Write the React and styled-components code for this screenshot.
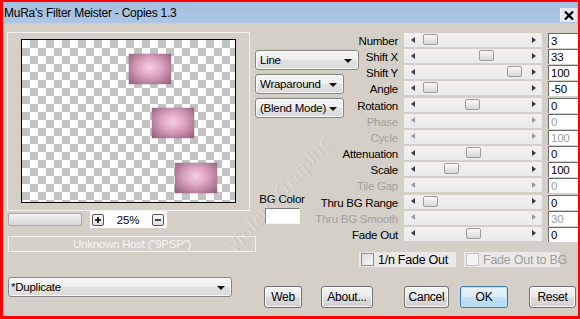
import React from "react"
import styled, { createGlobalStyle } from "styled-components"

const GlobalStyle = createGlobalStyle`
  html, body { margin: 0; padding: 0; background: #d4d0c8; }
  body { font-family: "Liberation Sans", Arial, sans-serif; }
`

const UI = `"Liberation Sans", Arial, sans-serif`

const Window = styled.div`
  position: relative;
  width: 580px;
  height: 319px;
  box-sizing: border-box;
  border-style: solid;
  border-color: #f00;
  border-width: 2px 2px 3px 3px;
  background: #d4d0c8;
  overflow: hidden;
  display: flex;
  flex-direction: column;
`
const TitleBar = styled.div`
  flex: none;
  height: 21px;
  display: flex;
  align-items: center;
  justify-content: space-between;
  background: linear-gradient(#a5bfdf, #adc6e3);
  border-bottom: 1px solid #c9cfd6;
`
const Title = styled.span`
  font: 12px ${UI};
  letter-spacing: -0.25px;
  color: #000;
  padding-left: 1px;
`
const CloseButton = styled.div`
  width: 16px;
  height: 14px;
  margin: 5px 1px 0 0;
  display: flex;
  align-items: center;
  justify-content: center;
  background: #e4e9f0;
  border-left: 1px solid #f4f6f9;
`
const Content = styled.div`
  flex: 1;
  display: grid;
  grid-template-columns: 248px 104px 1fr;
  grid-template-rows: 245px 1fr;
  padding: 8px 0 0 4px;
  font: 11.5px ${UI};
  letter-spacing: -0.25px;
  white-space: nowrap;
`
const LeftCol = styled.div`
  display: flex;
  flex-direction: column;
`
const PreviewGroup = styled.div`
  width: 243px;
  height: 179px;
  box-sizing: border-box;
  border: 1px solid #f3f2ef;
  display: flex;
  justify-content: center;
  padding-top: 6px;
`
const Canvas = styled.div`
  position: relative;
  width: 215px;
  height: 164px;
  box-sizing: border-box;
  border: 1px solid #000;
  background: conic-gradient(#c3c3c3 25%, #fff 0 50%, #c3c3c3 0 75%, #fff 0) 0 0 / 16px 16px;
`
const Copy = styled.div`
  position: absolute;
  width: 42px;
  height: 30px;
  background: radial-gradient(ellipse at 50% 45%, #f7cde3 0%, #dba3c0 40%, #a9728d 80%, #8e5e74 100%);
  box-shadow: 0 0 1px #6e4658;
`
const ZoomRow = styled.div`
  display: flex;
  align-items: center;
  height: 17px;
  padding-left: 1px;
`
const Trough = styled.div`
  width: 74px;
  height: 13px;
  box-sizing: border-box;
  border: 1px solid #a9a9a9;
  border-radius: 2px;
  background: linear-gradient(#f4f4f4, #e2e2e2 60%, #d8d8d8);
`
const ZoomBox = styled.div`
  margin-left: 8px;
  width: 77px;
  height: 17px;
  background: #fff;
  display: flex;
  align-items: center;
  padding-left: 2px;
  box-sizing: border-box;
`
const StepButton = styled.div`
  width: 12px;
  height: 12px;
  box-sizing: border-box;
  border: 1px solid #555;
  border-radius: 2px;
  background: linear-gradient(#fafafa, #dedede);
  display: flex;
  align-items: center;
  justify-content: center;
`
const ZoomValue = styled.span`
  width: 48px;
  text-align: center;
  color: #000;
`
const HostBox = styled.div`
  margin: 8px 0 0 1px;
  width: 248px;
  height: 16px;
  box-sizing: border-box;
  border: 1px solid #f2f1ee;
  display: flex;
  align-items: center;
  justify-content: center;
  color: #f7f6f4;
`
const MidCol = styled.div`
  display: flex;
  flex-direction: column;
  gap: 4px;
  padding-top: 18px;
`
const Combo = styled.div`
  width: ${(p) => p.$w}px;
  height: 20px;
  box-sizing: border-box;
  border: 1px solid #858585;
  border-radius: 3px;
  box-shadow: inset 0 0 0 1px #fbfbfb;
  background: linear-gradient(#f7f7f7, #ededed 50%, #e2e2e2 51%, #dadada);
  display: flex;
  align-items: center;
  justify-content: space-between;
  padding: 0 6px 0 4px;
  color: #000;
`
const ComboArrow = styled.span`
  width: 0;
  height: 0;
  border-left: 4px solid transparent;
  border-right: 4px solid transparent;
  border-top: 4px solid #111;
  margin-top: 1px;
`
const ColorPick = styled.div`
  margin: 71px 0 0 6px;
  width: 42px;
  display: flex;
  flex-direction: column;
  align-items: center;
  gap: 3px;
  color: #000;
`
const Swatch = styled.div`
  width: 35px;
  height: 16px;
  box-sizing: border-box;
  border: 1px solid #7d7d7d;
  border-right-color: #f4f4f4;
  border-bottom-color: #f4f4f4;
  background: #fff;
`
const RightCol = styled.div`
  padding-top: 1px;
  display: flex;
  flex-direction: column;
`
const Row = styled.div`
  display: grid;
  grid-template-columns: 39px 138px 31px;
  column-gap: 6px;
  height: 16.17px;
  align-items: start;
`
const Label = styled.div`
  display: flex;
  justify-content: flex-end;
  height: 15px;
  line-height: 16px;
  color: ${(p) => (p.$off ? "#a2a2a2" : "#000")};
`
const Track = styled.div`
  position: relative;
  height: 14px;
  background: linear-gradient(#f1f1f1, #ebebeb);
`
const ArrowL = styled.span`
  position: absolute;
  left: 7px;
  top: 3.5px;
  border-top: 3.5px solid transparent;
  border-bottom: 3.5px solid transparent;
  border-right: 4px solid ${(p) => (p.$off ? "#9a9a9a" : "#3c3c3c")};
`
const ArrowR = styled.span`
  position: absolute;
  right: 6px;
  top: 3.5px;
  border-top: 3.5px solid transparent;
  border-bottom: 3.5px solid transparent;
  border-left: 4px solid ${(p) => (p.$off ? "#9a9a9a" : "#3c3c3c")};
`
const Thumb = styled.span`
  position: absolute;
  top: 1px;
  width: 15px;
  height: 11px;
  box-sizing: border-box;
  border: 1px solid #9c9c9c;
  border-radius: 2px;
  background: linear-gradient(#fbfbfb, #e6e6e6 55%, #d9d9d9);
`
const ValueBox = styled.div`
  height: 15px;
  box-sizing: border-box;
  border-top: 1px solid #6a6a6a;
  border-left: 1px solid #6a6a6a;
  background: #fff;
  padding-left: 2px;
  line-height: 14px;
  color: ${(p) => (p.$off ? "#9e9e9e" : "#000")};
`
const CheckRow = styled.div`
  display: flex;
  margin-top: 9px;
  gap: 8px;
`
const CheckItem = styled.div`
  width: ${(p) => p.$w}px;
  height: 15px;
  background: #ebe9e5;
  display: flex;
  align-items: center;
  gap: 4px;
  padding-left: 2px;
  box-sizing: border-box;
  font-size: 12.5px;
  color: ${(p) => (p.$off ? "#9d9d9d" : "#000")};
`
const Box = styled.span`
  flex: none;
  width: 13px;
  height: 13px;
  box-sizing: border-box;
  border: 1px solid ${(p) => (p.$off ? "#c7c7c7" : "#8d8d8d")};
  background: ${(p) => (p.$off ? "#f4f4f4" : "linear-gradient(135deg, #dcdcdc, #fafafa)")};
`
const DupCombo = styled(Combo)`
  margin: 0 0 0 1px;
  padding: 0 6px 0 2px;
`
const ButtonRow = styled.div`
  grid-column: 2 / 4;
  display: flex;
  padding: 9px 0 0 9px;
`
const Button = styled.div`
  width: ${(p) => p.$w}px;
  margin-left: ${(p) => p.$gap || 0}px;
  height: 22px;
  box-sizing: border-box;
  border: 1px solid ${(p) => (p.$def ? "#3d7bad" : "#707070")};
  border-radius: 3px;
  box-shadow: inset 0 0 0 1px ${(p) => (p.$def ? "#bfe2f7" : "#fafafa")};
  background: ${(p) =>
    p.$def
      ? "linear-gradient(#e8f4fc, #dbeefb 50%, #c2e3f8 51%, #b3dbf5)"
      : "linear-gradient(#f4f4f4, #ebebeb 50%, #dddddd 51%, #d1d1d1)"};
  display: flex;
  align-items: center;
  justify-content: center;
  font-size: 12px;
  color: #000;
`
const Watermark = styled.div`
  position: absolute;
  left: 236px;
  top: 232px;
  transform: rotate(-49deg);
  transform-origin: 0 100%;
  font: italic 21px "Liberation Serif", serif;
  letter-spacing: 1px;
  color: rgba(255, 255, 255, 0.24);
  text-shadow: 1px 1px 0 rgba(120, 115, 105, 0.14);
  white-space: nowrap;
  pointer-events: none;
`

const sliders = [
  { label: "Number", value: "3", thumb: 19 },
  { label: "Shift X", value: "33", thumb: 75 },
  { label: "Shift Y", value: "100", thumb: 103 },
  { label: "Angle", value: "-50", thumb: 19 },
  { label: "Rotation", value: "0", thumb: 61 },
  { label: "Phase", value: "0", off: true },
  { label: "Cycle", value: "100", off: true },
  { label: "Attenuation", value: "0", thumb: 62 },
  { label: "Scale", value: "100", thumb: 40 },
  { label: "Tile Gap", value: "0", off: true },
  { label: "Thru BG Range", value: "0", thumb: 19 },
  { label: "Thru BG Smooth", value: "30", off: true },
  { label: "Fade Out", value: "0", thumb: 62 },
]

const copies = [
  { x: 107, y: 14 },
  { x: 130, y: 68 },
  { x: 153, y: 123 },
]

const PlusIcon = () => (
  <svg width="6" height="6" viewBox="0 0 6 6">
    <path d="M3 0v6M0 3h6" stroke="#000" strokeWidth="1.6" />
  </svg>
)
const MinusIcon = () => (
  <svg width="6" height="6" viewBox="0 0 6 6">
    <path d="M0 3h6" stroke="#000" strokeWidth="1.4" />
  </svg>
)

export default function App() {
  return (
    <>
      <GlobalStyle />
      <Window>
        <TitleBar>
          <Title>MuRa's Filter Meister - Copies 1.3</Title>
          <CloseButton>
            <svg width="10" height="9" viewBox="0 0 10 9">
              <path d="M1 0.5l8 8M9 0.5l-8 8" stroke="#000" strokeWidth="2.2" />
            </svg>
          </CloseButton>
        </TitleBar>
        <Content>
          <LeftCol>
            <PreviewGroup>
              <Canvas>
                {copies.map((c, i) => (
                  <Copy key={i} style={{ left: c.x, top: c.y }} />
                ))}
              </Canvas>
            </PreviewGroup>
            <ZoomRow>
              <Trough />
              <ZoomBox>
                <StepButton>
                  <PlusIcon />
                </StepButton>
                <ZoomValue>25%</ZoomValue>
                <StepButton>
                  <MinusIcon />
                </StepButton>
              </ZoomBox>
            </ZoomRow>
            <HostBox>Unknown Host ("9PSP")</HostBox>
          </LeftCol>
          <MidCol>
            <Combo $w={104}>
              Line <ComboArrow />
            </Combo>
            <Combo $w={89}>
              Wraparound <ComboArrow />
            </Combo>
            <Combo $w={89}>
              (Blend Mode) <ComboArrow />
            </Combo>
            <ColorPick>
              BG Color
              <Swatch />
            </ColorPick>
          </MidCol>
          <RightCol>
            {sliders.map((s) => (
              <Row key={s.label}>
                <Label $off={s.off}>{s.label}</Label>
                <Track>
                  <ArrowL $off={s.off} />
                  {!s.off && <Thumb style={{ left: s.thumb }} />}
                  <ArrowR $off={s.off} />
                </Track>
                <ValueBox $off={s.off}>{s.value}</ValueBox>
              </Row>
            ))}
            <CheckRow>
              <CheckItem $w={97}>
                <Box />
                1/n Fade Out
              </CheckItem>
              <CheckItem $w={96} $off>
                <Box $off />
                Fade Out to BG
              </CheckItem>
            </CheckRow>
          </RightCol>
          <LeftCol>
            <DupCombo $w={224}>
              *Duplicate <ComboArrow />
            </DupCombo>
          </LeftCol>
          <ButtonRow>
            <Button $w={38}>Web</Button>
            <Button $w={52} $gap={19}>About...</Button>
            <Button $w={45} $gap={31}>Cancel</Button>
            <Button $w={48} $gap={11} $def>OK</Button>
            <Button $w={47} $gap={21}>Reset</Button>
          </ButtonRow>
        </Content>
        <Watermark>VioletteGraphic</Watermark>
      </Window>
    </>
  )
}
